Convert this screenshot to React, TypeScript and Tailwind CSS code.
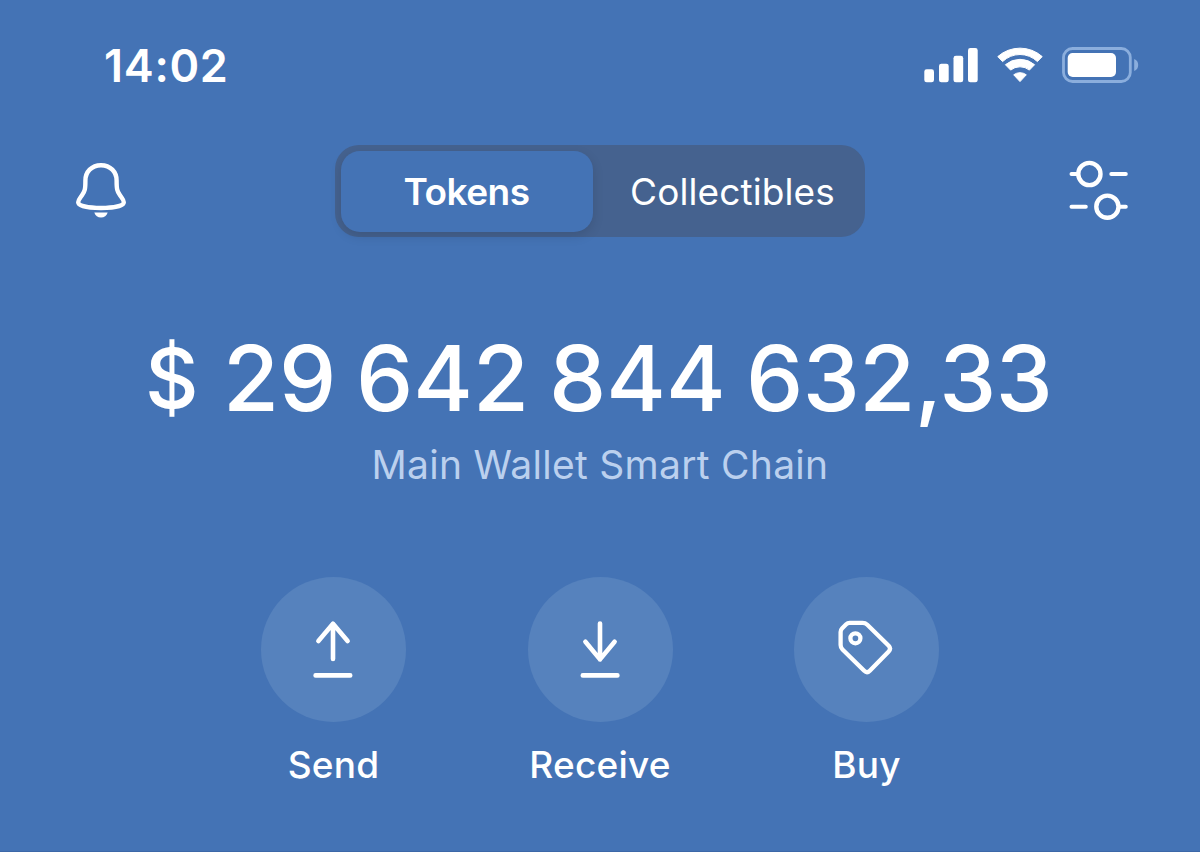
import type { ReactNode } from 'react';

const SignalIcon = () => (
    <svg width="54" height="36" viewBox="0 0 54 36" fill="currentColor">
        <rect x="0.3" y="22.3" width="9.7" height="13" rx="2.4" />
        <rect x="15" y="16.7" width="9.7" height="18.6" rx="2.4" />
        <rect x="29.5" y="8.8" width="9.7" height="26.5" rx="2.4" />
        <rect x="44" y="1" width="9.7" height="34.3" rx="2.4" />
    </svg>
);

const WifiIcon = () => (
    <svg width="46" height="36" viewBox="0 0 46 36" fill="currentColor" stroke="currentColor" strokeLinejoin="round">
        <path d="M0.8 9.6A33.4 33.4 0 0 1 45.2 9.6L40.4 14.6A24.9 24.9 0 0 0 5.6 14.6Z" />
        <path d="M8.4 17.7A22.5 22.5 0 0 1 37.6 17.7L32.4 23.1A15 15 0 0 0 13.6 23.1Z" />
        <path d="M16.7 27.8A10.5 10.5 0 0 1 29.3 27.8L23 34.6Z" />
    </svg>
);

const BatteryIcon = () => (
    <svg width="77" height="36" viewBox="0 0 77 36" fill="none">
        <rect x="1.5" y="1.5" width="66.8" height="33" rx="9" stroke="#8BAEDD" strokeWidth="2.8" />
        <rect x="5.7" y="6" width="48.3" height="24" rx="5" fill="#fff" />
        <path d="M72.2 12C74.8 13 76.2 15.3 76.2 18S74.8 23 72.2 24Z" fill="#8BAEDD" />
    </svg>
);

const BellIcon = () => (
    <svg width="50" height="55" viewBox="0 0 50 55" fill="none">
        <path
            d="M25 2.2C15.5 2.2 9.4 9 9.4 17.5C9.4 26 9 28 6 32.3C4 35.2 2.2 37 2.2 39.3C2.2 42.8 12 45 25 45S47.8 42.8 47.8 39.3C47.8 37 46 35.2 44 32.3C41 28 40.6 26 40.6 17.5C40.6 9 34.5 2.2 25 2.2Z"
            stroke="currentColor"
            strokeWidth="4.4"
        />
        <path d="M18.3 49.4H31.7C30.6 52.8 28.3 54.6 25 54.6S19.4 52.8 18.3 49.4Z" fill="currentColor" />
    </svg>
);

const FilterIcon = () => (
    <svg width="60" height="60" viewBox="0 0 60 60" fill="none" stroke="currentColor" strokeWidth="4" strokeLinecap="round">
        <circle cx="20.4" cy="14" r="11.1" strokeWidth="4.4" />
        <circle cx="38.4" cy="46.7" r="11.1" strokeWidth="4.4" />
        <path d="M2.5 14H8M42.3 14H56.8M2.5 46.7H16.8M51 46.7H56.8" />
    </svg>
);

const SendIcon = () => (
    <svg width="40" height="58" viewBox="0 0 40 58" fill="none" stroke="currentColor" strokeWidth="4.6" strokeLinecap="round" strokeLinejoin="round">
        <path d="M20 3.7V39M5.4 21L20 3.7L34.6 21M2.6 55.4H37.2" />
    </svg>
);

const ReceiveIcon = () => (
    <svg width="40" height="58" viewBox="0 0 40 58" fill="none" stroke="currentColor" strokeWidth="4.6" strokeLinecap="round" strokeLinejoin="round">
        <path d="M20 3.5V39.4M5.4 21.8L20 39.4L34.6 21.8M2.8 55.4H37.4" />
    </svg>
);

const TagIcon = () => (
    <svg width="56" height="58" viewBox="0 0 56 58" fill="none" stroke="currentColor" strokeWidth="4.3">
        <path d="M2.6 12Q2.6 9.8 4 8.4L8.2 4.2Q9.6 2.8 11.6 2.8H24.5Q27.3 2.8 29.3 4.7L50.7 25.8Q53.4 28.6 50.7 31.4L31.8 50.8Q29 53.6 26.2 50.8L4.5 29.5Q2.6 27.6 2.6 25Z" />
        <circle cx="17.4" cy="18.3" r="5" />
    </svg>
);

interface ActionProps {
    label: string;
    icon: ReactNode;
}

const Action = ({ label, icon }: ActionProps) => (
    <button className="flex w-[145px] flex-col items-center">
        <span className="flex h-[145px] w-[145px] items-center justify-center rounded-full bg-[#5682BD] pr-px pb-[2px]">{icon}</span>
        <span className="mt-[18px] text-[37px] leading-[50px] font-medium tracking-[0.2px]">{label}</span>
    </button>
);

const actions = [
    { label: 'Send', icon: <SendIcon /> },
    { label: 'Receive', icon: <ReceiveIcon /> },
    { label: 'Buy', icon: <TagIcon /> },
];

// the amount is split by thousands, each group has its own width
const amount = [
    { text: '$', className: 'w-[78px] text-[83px]' },
    { text: '29', className: 'w-[133px]' },
    { text: '642', className: 'w-[193px]' },
    { text: '844', className: 'w-[197px]' },
    { text: '632,33', className: 'tracking-[-0.6px]' },
];

export default function App() {
    return (
        <div className="h-[858px] w-[1200px] overflow-hidden bg-white font-['Inter',sans-serif] text-white">
            <div className="h-[852px] border-b border-[#3C68A8] bg-[#4473B5]">
                <div className="flex h-[130px] items-center justify-between pr-[61px] pl-[104px]">
                    <span className="text-[45px] leading-none font-semibold tracking-[0.7px]">14:02</span>
                    <div className="flex items-center">
                        <SignalIcon />
                        <div className="ml-[19px]">
                            <WifiIcon />
                        </div>
                        <div className="ml-[19px]">
                            <BatteryIcon />
                        </div>
                    </div>
                </div>

                <div className="mt-[15px] flex h-[92px] items-center justify-between pr-[71px] pl-[76px]">
                    <div className="pb-[2px]">
                        <BellIcon />
                    </div>
                    <div className="ml-[4px] flex h-[92px] w-[530px] items-center rounded-[24px] bg-[#45628F] p-[6px]">
                        <div className="flex h-[81px] w-[252px] items-center justify-center rounded-[19px] bg-[#4473B5] pt-[2px] text-[37px] font-semibold tracking-[-0.5px] shadow-[0_4px_12px_rgba(0,0,0,0.12)]">
                            Tokens
                        </div>
                        <div className="flex flex-1 items-center justify-center pt-[2px] pl-[14px] text-[37px] tracking-[0.1px]">
                            Collectibles
                        </div>
                    </div>
                    <div className="pb-[2px]">
                        <FilterIcon />
                    </div>
                </div>

                <div className="mt-[91px] flex h-[100px] items-center pl-[145px] text-[91px] leading-none font-medium whitespace-nowrap">
                    {amount.map((group) => (
                        <span key={group.text} className={group.className}>
                            {group.text}
                        </span>
                    ))}
                </div>
                <p className="mt-[17px] text-center text-[39px] leading-[40px] tracking-[0.28px] text-[#BBD0EE]">Main Wallet Smart Chain</p>

                <div className="mt-[92px] flex justify-center gap-[121.5px]">
                    {actions.map((action) => (
                        <Action key={action.label} {...action} />
                    ))}
                </div>
            </div>
        </div>
    );
}
